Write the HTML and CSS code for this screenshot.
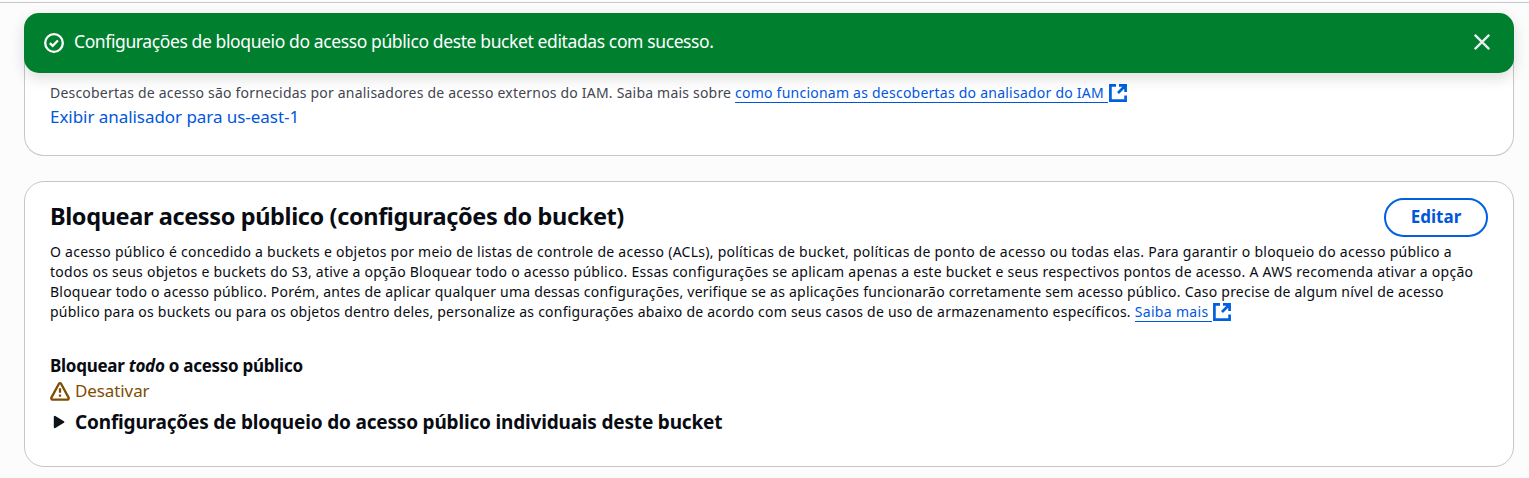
FILE: index.html
```html
<!DOCTYPE html>
<html lang="pt-BR">
<head>
<meta charset="utf-8">
<title>Bloquear acesso público</title>
<link rel="stylesheet" href="styles.css">
</head>
<body>
<div class="flash" role="status">
  <svg class="flash-icon" viewBox="0 0 20 20"><circle cx="10" cy="10" r="8.8"/><path d="M5.8 10.2l2.9 2.7 5.2-5.4"/></svg>
  <span class="flash-text">Configurações de bloqueio do acesso público deste bucket editadas com sucesso.</span>
  <button class="close" aria-label="Fechar"><svg viewBox="0 0 16 16"><path d="M.8.8l14.4 14.4M15.2.8L.8 15.2"/></svg></button>
</div>
<main class="page">
  <section class="card findings">
    <p class="small muted"><span class="t-find">Descobertas de acesso são fornecidas por analisadores de acesso externos do IAM. Saiba mais sobre </span><a class="link t-link">como funcionam as descobertas do analisador do IAM </a><svg class="ext" viewBox="0 0 18 18"><path d="M7 1.4H1.4v15.2h15.2V11.5M10 1.4h6.6V8M16 2L9 9"/></svg></p>
    <a class="analyzer">Exibir analisador para us-east-1</a>
  </section>
  <section class="card settings">
    <header class="head">
      <h2>Bloquear acesso público (configurações do bucket)</h2>
      <button class="edit">Editar</button>
    </header>
    <p class="small desc">
      <span class="line l1">O acesso público é concedido a buckets e objetos por meio de listas de controle de acesso (ACLs), políticas de bucket, políticas de ponto de acesso ou todas elas. Para garantir o bloqueio do acesso público a</span>
      <span class="line l2">todos os seus objetos e buckets do S3, ative a opção Bloquear todo o acesso público. Essas configurações se aplicam apenas a este bucket e seus respectivos pontos de acesso. A AWS recomenda ativar a opção</span>
      <span class="line l3">Bloquear todo o acesso público. Porém, antes de aplicar qualquer uma dessas configurações, verifique se as aplicações funcionarão corretamente sem acesso público. Caso precise de algum nível de acesso</span>
      <span class="line l4">público para os buckets ou para os objetos dentro deles, personalize as configurações abaixo de acordo com seus casos de uso de armazenamento específicos. <a class="link t-more">Saiba mais </a><svg class="ext" viewBox="0 0 18 18"><path d="M7 1.4H1.4v15.2h15.2V11.5M10 1.4h6.6V8M16 2L9 9"/></svg></span>
    </p>
    <h3 class="label">Bloquear <em>todo</em> o acesso público</h3>
    <div class="status"><svg viewBox="0 0 20 19"><path d="M8.8 2Q10 .4 11.2 2L18.6 15.6Q19 17.5 17.4 17.7H2.6Q1 17.5 1.4 15.6z"/><path class="bang" d="M10 6.3v4.5M10 12.4v2.4"/></svg><span>Desativar</span></div>
    <div class="expand"><svg viewBox="0 0 12 14"><path d="M1.8 1.8v10.4L10.4 7z"/></svg><span>Configurações de bloqueio do acesso público individuais deste bucket</span></div>
  </section>
</main>
</body>
</html>
```
FILE: styles.css
```css
* { box-sizing: border-box; }
body { margin: 0; height: 478px; overflow: hidden; background: #fcfcfd; color: #080c12; font-family: "Noto Sans", "Open Sans", sans-serif; white-space: nowrap; }
h2, h3, p { margin: 0; }
svg { fill: none; flex: none; }
button { font: inherit; background: none; border: 0; padding: 0; }
.page { height: 478px; margin-top: 2px; border-top: 1px solid #c6c6cd; padding: 0 15px 0 24px; }
.flash { position: absolute; z-index: 2; top: 13px; left: 24px; right: 15px; height: 60px; padding: 0 24px 2px 20px; display: flex; align-items: center; background: #00802f; border-radius: 15px; box-shadow: 0 5px 14px 1px rgba(0, 7, 22, .12); color: #fff; }
.flash-icon { width: 20px; height: 20px; margin: 2px 10px 0 0; stroke: #fff; stroke-width: 2.3; }
.flash-text { flex: 1; margin-top: -2px; font-size: 17.5px; letter-spacing: -.39px; }
.close { width: 16px; height: 16px; display: flex; }
.close svg { width: 16px; height: 16px; stroke: #ebebf0; stroke-width: 2.3; }
.card { background: #fff; border: 1px solid #c6c6cd; border-radius: 20px; padding: 0 25px; }
.findings { height: 113px; margin-top: 40px; padding-top: 40px; border-top: 0; border-radius: 0 0 20px 20px; }
.small { font-size: 14px; line-height: 20px; }
.muted { color: #424650; }
.link { color: #0057dc; border-bottom: 1px solid #0057dc; white-space: pre; }
.ext { width: 18px; height: 18px; margin-left: 1px; vertical-align: -4px; stroke: #0060e0; stroke-width: 2.7; }
.t-find { letter-spacing: .2px; }
.t-link { letter-spacing: .235px; }
.t-more { letter-spacing: .32px; }
.analyzer { display: block; margin-top: 2px; font-size: 17px; line-height: 24px; letter-spacing: -.05px; color: #0057dc; }
.settings { height: 286px; margin-top: 25px; padding-top: 16px; }
.head { display: flex; justify-content: space-between; height: 39px; }
h2 { font-size: 23.5px; line-height: 37px; letter-spacing: -.38px; }
.edit { width: 104px; height: 39px; padding-bottom: 2px; border: 2px solid #0060e0; border-radius: 20px; color: #0057dc; font-size: 17px; font-weight: 700; }
.desc { margin-top: 5px; }
.line { display: block; height: 20px; }
.l1 { letter-spacing: .263px; }
.l2 { letter-spacing: .253px; }
.l3 { letter-spacing: .225px; }
.l4 { letter-spacing: .226px; }
.label { margin-top: 32px; font-size: 17px; line-height: 24px; letter-spacing: -.27px; }
.status { display: flex; align-items: center; height: 26px; gap: 5px; color: #7f4c00; font-size: 17px; letter-spacing: -.1px; }
.status span { margin-top: -2px; }
.status svg { width: 20px; height: 19px; stroke: #7f4c00; stroke-width: 2.3; stroke-linejoin: round; }
.expand { display: flex; align-items: center; height: 36px; font-size: 19px; font-weight: 700; letter-spacing: -.18px; }
.expand svg { width: 12px; height: 14px; margin: 0 10px 0 3px; fill: #0f141a; stroke: #0f141a; stroke-width: 2; stroke-linejoin: round; }
```
